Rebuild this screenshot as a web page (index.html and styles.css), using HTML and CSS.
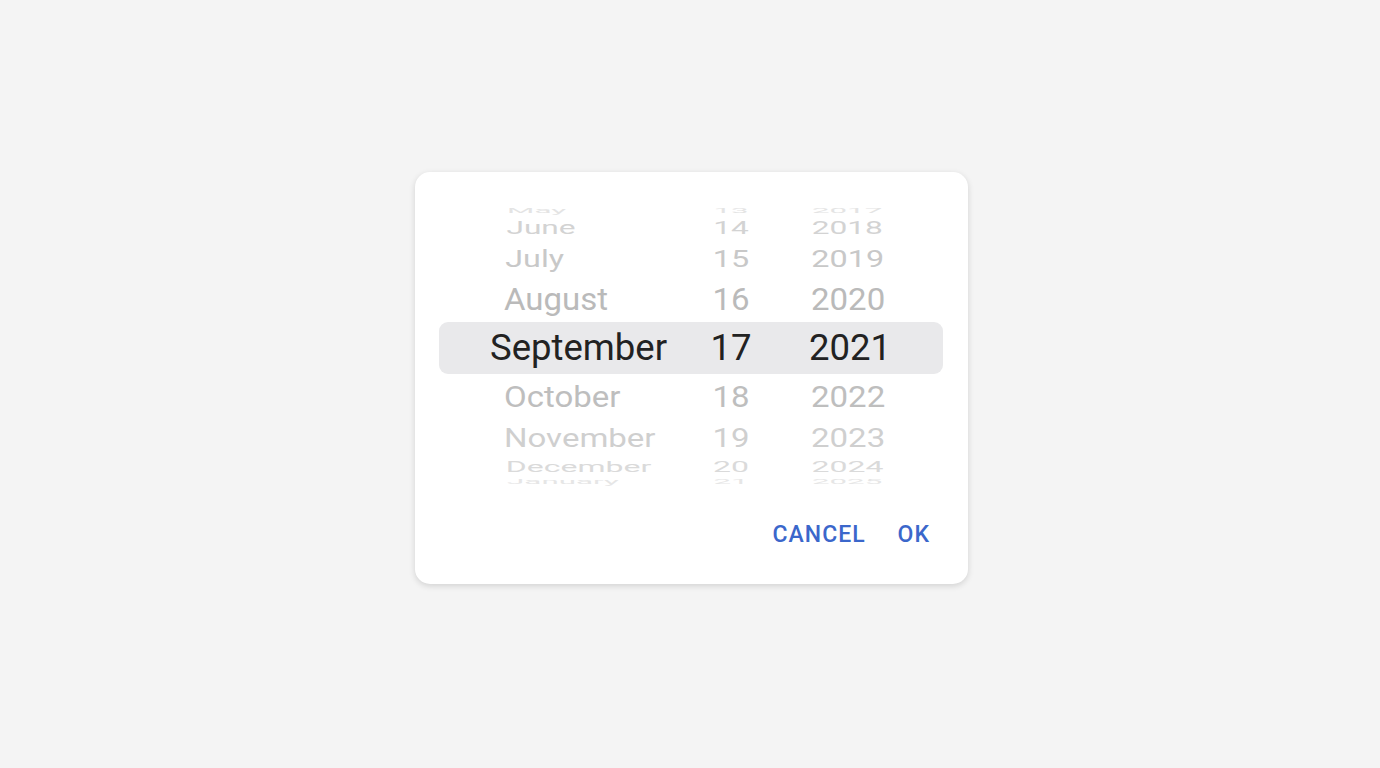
FILE: index.html
```html
<!DOCTYPE html>
<html>
	<head>
		<title>Date picker</title><meta charset="utf-8">
		<link rel="stylesheet" href="styles.css">
	</head>
	<body>
		<div class="dialogo">
			<div class="rueda">
				<div class="fila f4"><span class="mes">May</span><span class="dia">13</span><span class="anio">2017</span></div>
				<div class="fila f3"><span class="mes">June</span><span class="dia">14</span><span class="anio">2018</span></div>
				<div class="fila f2"><span class="mes">July</span><span class="dia">15</span><span class="anio">2019</span></div>
				<div class="fila f1"><span class="mes">August</span><span class="dia">16</span><span class="anio">2020</span></div>
				<div class="fila sel"><span class="mes">September</span><span class="dia">17</span><span class="anio">2021</span></div>
				<div class="fila b1"><span class="mes">October</span><span class="dia">18</span><span class="anio">2022</span></div>
				<div class="fila b2"><span class="mes">November</span><span class="dia">19</span><span class="anio">2023</span></div>
				<div class="fila b3"><span class="mes">December</span><span class="dia">20</span><span class="anio">2024</span></div>
				<div class="fila b4"><span class="mes">January</span><span class="dia">21</span><span class="anio">2025</span></div>
			</div>
			<div class="botones">
				<button class="boton">CANCEL</button>
				<button class="boton">OK</button>
			</div>
		</div>
	</body>
</html>
```

FILE: styles.css
```css
/* selector de fecha tipo rueda */

html, body {margin: 0; height: 100%;}
body {background-color: #f4f4f4; font-family: Roboto, "Liberation Sans", sans-serif; display: flex; align-items: flex-start; justify-content: center;}
.dialogo {margin-top: 172px; margin-left: 3px; width: 553px; height: 412px; box-sizing: border-box; padding: 35px 25px 0 24px; background-color: #fff; border-radius: 15px; box-shadow: 0 2px 6px rgba(0,0,0,0.14);}

.rueda {height: 279px; overflow: hidden; display: flex; flex-direction: column;}
.fila {display: flex; align-items: center; flex-shrink: 0; font-size: 33px; line-height: 1; color: #bbb;}
.fila span {display: block; white-space: nowrap;}
.mes {width: 251px; box-sizing: border-box; padding-left: 65px;}
.dia {width: 82px; text-align: center;}
.anio {padding-left: 39px;}

.sel {height: 52px; background-color: #e9e9eb; border-radius: 9px; font-size: 36.5px; color: #222;}
.sel .mes {padding-left: 51px;}
.sel .anio {padding-left: 37px;}

.f4 {height: 7px; color: #e4e4e4;}
.f3 {height: 26px; color: #d3d3d3;}
.f2 {height: 36px; color: #c8c8c8;}
.f1 {height: 46px; color: #bababa;}
.b1 {height: 44px; color: #bebebe;}
.b2 {height: 38px; color: #cfcfcf;}
.b3 {height: 20px; color: #dadada;}
.b4 {height: 10px; color: #e6e6e6;}

.f4 span, .b4 span {transform: scale(0.95, 0.2);}
.f3 span {transform: scale(0.96, 0.55);}
.b3 span {transform: scale(0.97, 0.47);}
.f2 span {transform: scale(0.98, 0.7);}
.b2 span {transform: scaleY(0.8);}
.f1 span {transform: scaleY(0.94);}
.b1 span {transform: scaleY(0.9);}

.botones {display: flex; justify-content: flex-end; gap: 8px; margin-top: 31px; padding-right: 1px;}
.boton {background: none; border: none; padding: 6px 12px; font-family: Roboto, "Liberation Sans", sans-serif; font-size: 23px; font-weight: 500; letter-spacing: 1px; color: #3b67cb; cursor: pointer; line-height: 24px;}
```
